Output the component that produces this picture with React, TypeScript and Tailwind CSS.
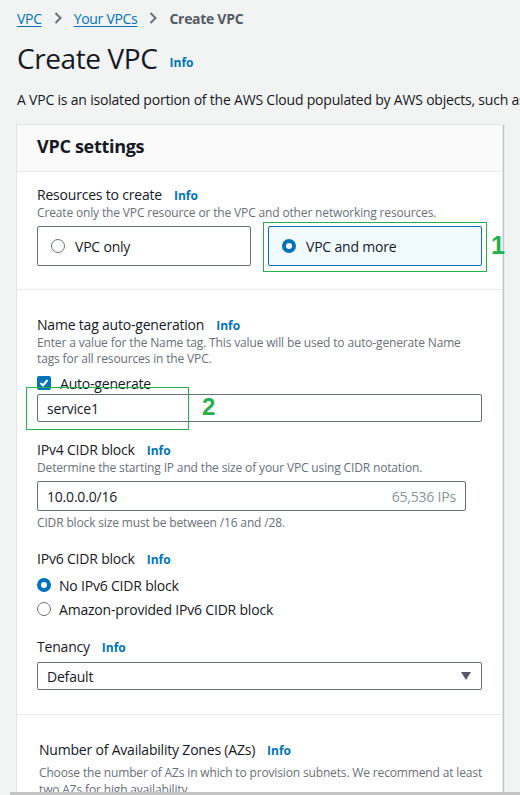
import React from "react";

const Info = () => (
  <span className="ml-[12px] text-[12px] font-bold tracking-normal text-[#0073bb]">Info</span>
);

function Radio({ checked }: { checked?: boolean }) {
  return checked ? (
    <span className="box-border inline-block h-[14px] w-[14px] shrink-0 rounded-full border-[4px] border-[#0073bb] bg-white" />
  ) : (
    <span className="box-border inline-block h-[14px] w-[14px] shrink-0 rounded-full border-[1.5px] border-[#687078] bg-white" />
  );
}

function Field({
  label,
  desc,
  className = "",
  children,
}: {
  label: string;
  desc?: React.ReactNode;
  className?: string;
  children?: React.ReactNode;
}) {
  return (
    <div className={className}>
      <div className="flex h-[20px] items-baseline text-[14px] leading-[20px] tracking-[-0.2px] text-[#16191f]">
        {label}
        <Info />
      </div>
      {desc && (
        <div className="whitespace-nowrap text-[12px] leading-[16px] tracking-[-0.15px] text-[#687078]">
          {desc}
        </div>
      )}
      {children}
    </div>
  );
}

export default function App() {
  return (
    <div className="flex h-[795px] w-[520px] flex-col overflow-hidden bg-[#f2f3f3] font-['Open_Sans',sans-serif] text-[#16191f]">
      <div className="flex-1 overflow-hidden">
        <nav className="flex h-[36px] items-center px-[17px] text-[14px] tracking-[-0.3px]">
          <span className="text-[#0073bb] underline underline-offset-2">VPC</span>
          <svg width="8" height="12" viewBox="0 0 8 12" className="mx-[12px]">
            <path d="M1.5 1 L6.5 6 L1.5 11" fill="none" stroke="#687078" strokeWidth="2" />
          </svg>
          <span className="text-[#0073bb] underline underline-offset-2">Your VPCs</span>
          <svg width="8" height="12" viewBox="0 0 8 12" className="mx-[12px]">
            <path d="M1.5 1 L6.5 6 L1.5 11" fill="none" stroke="#687078" strokeWidth="2" />
          </svg>
          <span className="font-bold text-[#545b64]">Create VPC</span>
        </nav>
        <div className="flex h-[44px] items-center px-[17px]">
          <h1 className="text-[28px] leading-[36px] tracking-[-0.4px] text-[#16191f]">Create VPC</h1>
          <span className="ml-[12px] mt-[10px] text-[12px] font-bold text-[#0073bb]">Info</span>
        </div>
        <p className="mt-[10px] whitespace-nowrap px-[17px] text-[14px] leading-[20px] tracking-[-0.2px]">
          A VPC is an isolated portion of the AWS Cloud populated by AWS objects, such as Amazon EC2 instances.
        </p>

        <div className="ml-[16px] mt-[14px] w-[487px] border border-[#e3e6e6] bg-white shadow-[1px_1px_1px_rgba(0,28,36,0.2)]">
          <div className="flex h-[47px] items-center border-b border-[#eaeded] bg-[#fafafa] px-[20px] pb-[3px]">
            <h2 className="text-[18px] font-bold tracking-[-0.3px]">VPC settings</h2>
          </div>

          <div className="border-b border-[#eaeded] px-[20px] pb-[23px] pt-[13px]">
            <Field
              label="Resources to create"
              desc="Create only the VPC resource or the VPC and other networking resources."
            >
              <div className="mt-[5px] grid grid-cols-2 gap-[17px] text-[14px] tracking-[-0.2px]">
                <div className="flex h-[40px] items-center gap-[10px] rounded-[2px] border border-[#687078] px-[13px]">
                  <Radio />
                  VPC only
                </div>
                <div className="relative">
                  <div className="flex h-[40px] items-center gap-[10px] rounded-[2px] border border-[#0073bb] bg-[#f1faff] px-[13px]">
                    <Radio checked />
                    VPC and more
                  </div>
                  <span className="pointer-events-none absolute -bottom-[6px] -left-[5px] -right-[5px] -top-[4px] border border-[#22b14c]" />
                  <span className="absolute left-[calc(100%+9px)] top-[4px] font-['Liberation_Sans',sans-serif] text-[25px] font-bold leading-[30px] text-[#22b14c]">
                    1
                  </span>
                </div>
              </div>
            </Field>
          </div>

          <div className="border-b border-[#eaeded] px-[20px] pb-[24px] pt-[25px]">
            <Field
              label="Name tag auto-generation"
              desc={
                <>
                  Enter a value for the Name tag. This value will be used to auto-generate Name
                  <br />
                  tags for all resources in the VPC.
                </>
              }
            >
              <div className="mt-[8px] flex h-[16px] items-center gap-[9px] text-[14px] tracking-[-0.2px]">
                <span className="flex h-[14px] w-[14px] items-center justify-center rounded-[2px] bg-[#0073bb]">
                  <svg width="10" height="10" viewBox="0 0 10 10">
                    <path d="M1.5 5 L4 7.5 L8.5 2" fill="none" stroke="white" strokeWidth="2" />
                  </svg>
                </span>
                Auto-generate
              </div>
              <div className="relative mt-[3px]">
                <div className="flex h-[28px] items-center rounded-[2px] border border-[#687078] px-[9px] text-[14px] tracking-[-0.2px]">
                  service1
                </div>
                <span className="pointer-events-none absolute -left-[11px] -top-[7px] h-[43px] w-[163px] border border-[#22b14c]" />
                <span className="absolute left-[165px] top-[-2px] font-['Liberation_Sans',sans-serif] text-[24px] font-bold leading-[30px] text-[#22b14c]">
                  2
                </span>
              </div>
            </Field>

            <Field
              label="IPv4 CIDR block"
              desc="Determine the starting IP and the size of your VPC using CIDR notation."
              className="mt-[18px]"
            >
              <div className="mt-[5px] mr-[16px] flex h-[30px] items-center justify-between rounded-[2px] border border-[#687078] px-[9px] text-[14px] tracking-[-0.2px]">
                <span>10.0.0.0/16</span>
                <span className="text-[#879596]">65,536 IPs</span>
              </div>
              <div className="mt-[4px] text-[12px] leading-[16px] tracking-[-0.15px] text-[#687078]">
                CIDR block size must be between /16 and /28.
              </div>
            </Field>

            <Field label="IPv6 CIDR block" className="mt-[18px]">
              <div className="mt-[4px] flex h-[24px] items-center gap-[8px] text-[14px] tracking-[-0.2px]">
                <Radio checked />
                No IPv6 CIDR block
              </div>
              <div className="flex h-[24px] items-center gap-[8px] text-[14px] tracking-[-0.2px]">
                <Radio />
                Amazon-provided IPv6 CIDR block
              </div>
            </Field>

            <Field label="Tenancy" className="mt-[16px]">
              <div className="mt-[5px] flex h-[28px] items-center justify-between rounded-[2px] border border-[#687078] pl-[9px] pr-[10px] text-[14px] tracking-[-0.2px]">
                <span>Default</span>
                <svg width="10" height="8" viewBox="0 0 10 8">
                  <path d="M0 0 H10 L5 8 Z" fill="#545b64" />
                </svg>
              </div>
            </Field>
          </div>

          <div className="px-[22px] pt-[25px]">
            <div className="flex h-[20px] items-baseline text-[14px] leading-[20px] tracking-[-0.2px]">
              Number of Availability Zones (AZs)
              <Info />
            </div>
            <div className="mt-[4px] whitespace-nowrap text-[12px] leading-[17px] tracking-[-0.15px] text-[#687078]">
              Choose the number of AZs in which to provision subnets. We recommend at least
              <br />
              two AZs for high availability.
            </div>
          </div>
        </div>
      </div>
      <div className="ml-[10px] h-[3px] shrink-0 bg-[#c4c4c4]" />
    </div>
  );
}
